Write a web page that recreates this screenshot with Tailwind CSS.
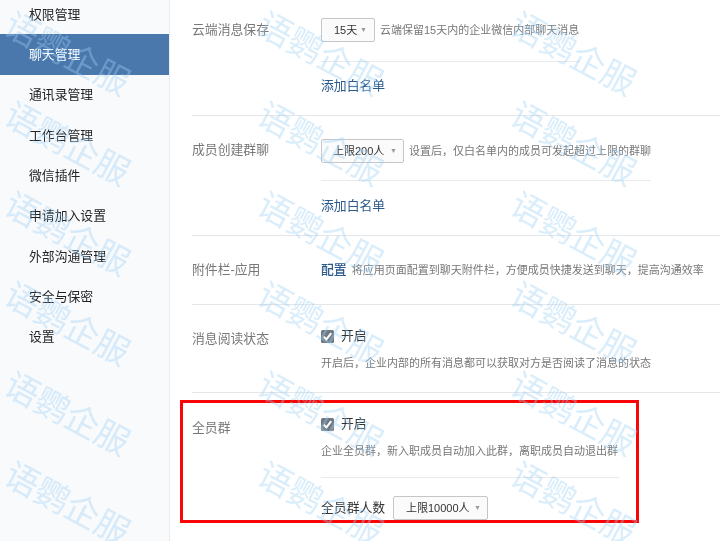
<!DOCTYPE html>
<html lang="zh">
<head>
<meta charset="utf-8">
<script src="https://cdn.jsdelivr.net/npm/@tailwindcss/browser@4"></script>
</head>
<body class="bg-white">
<div class="relative flex w-[720px] h-[541px] overflow-hidden font-['Liberation_Sans','Noto_Sans_CJK_SC',sans-serif] text-[12.83px] blur-[0.3px]">
  <aside class="w-[170px] shrink-0 bg-[#f8fafc] border-r border-dotted border-[#dcdfe3] text-[#222]">
    <ul class="-mt-[6px]">
      <li class="h-[40.33px] pl-[29px] flex items-center">权限管理</li>
      <li class="h-[40.33px] pl-[29px] flex items-center bg-[#4a78ad] text-white">聊天管理</li>
      <li class="h-[40.33px] pl-[29px] flex items-center">通讯录管理</li>
      <li class="h-[40.33px] pl-[29px] flex items-center">工作台管理</li>
      <li class="h-[40.33px] pl-[29px] flex items-center">微信插件</li>
      <li class="h-[40.33px] pl-[29px] flex items-center">申请加入设置</li>
      <li class="h-[40.33px] pl-[29px] flex items-center">外部沟通管理</li>
      <li class="h-[40.33px] pl-[29px] flex items-center">安全与保密</li>
      <li class="h-[40.33px] pl-[29px] flex items-center">设置</li>
    </ul>
  </aside>
  <main class="flex-1 pl-[22px] text-[#787878]">
    <section class="h-[236px] border-b border-[#e4e6e9]">
      <div class="h-[115px] flex">
        <div class="w-[129px] pt-[21px] leading-[18px]">云端消息保存</div>
        <div class="flex-1">
          <div class="flex items-start gap-[5px] pt-[18px] w-[259px] h-[62px] border-b border-[#e8eaec]">
            <button class="w-[54px] h-[24px] shrink-0 flex items-center justify-between pl-[12px] pr-[7px] bg-[#fbfbfb] border border-[#c4c6c9] rounded-[2px] text-[11px] text-[#333] whitespace-nowrap">15天<span class="text-[7px] text-[#9a9a9a]">▼</span></button>
            <span class="text-[11px] leading-[24px] text-[#777] whitespace-nowrap">云端保留15天内的企业微信内部聊天消息</span>
          </div>
          <a class="block mt-[14px] leading-[20px] text-[#2b5a8c]">添加白名单</a>
        </div>
      </div>
      <div class="h-[120px] flex border-t border-[#e4e6e9]">
        <div class="w-[129px] pt-[24px] leading-[20px]">成员创建群聊</div>
        <div class="flex-1">
          <div class="flex items-start gap-[5px] pt-[23px] w-[330px] h-[65px] border-b border-[#e8eaec]">
            <button class="w-[83px] h-[24px] shrink-0 flex items-center justify-between pl-[11px] pr-[6px] bg-[#fbfbfb] border border-[#c4c6c9] rounded-[2px] text-[11px] text-[#333] whitespace-nowrap">上限200人<span class="text-[7px] text-[#9a9a9a]">▼</span></button>
            <span class="text-[11px] leading-[24px] text-[#777] whitespace-nowrap">设置后，仅白名单内的成员可发起超过上限的群聊</span>
          </div>
          <a class="block mt-[15px] leading-[20px] text-[#2b5a8c]">添加白名单</a>
        </div>
      </div>
    </section>
    <section class="h-[69px] flex items-center border-b border-[#e4e6e9]">
      <div class="w-[129px]">附件栏-应用</div>
      <div class="flex-1 flex items-center gap-[5px]">
        <a class="text-[#2b5a8c] font-medium">配置</a>
        <span class="text-[11px] text-[#777] whitespace-nowrap">将应用页面配置到聊天附件栏，方便成员快捷发送到聊天，提高沟通效率</span>
      </div>
    </section>
    <section class="h-[88px] flex border-b border-[#e4e6e9]">
      <div class="w-[129px] pt-[24px] leading-[20px]">消息阅读状态</div>
      <div class="flex-1 pt-[20px]">
        <label class="flex items-center gap-[7px] text-[#333] h-[22px]">
          <svg class="w-[13px] h-[13px]" viewBox="0 0 13 13"><rect width="13" height="13" rx="1.5" fill="#6f7882"/><path d="M2.8 6.6 5.4 9.4 10.2 3.2" fill="none" stroke="#fff" stroke-width="2"/></svg>开启
        </label>
        <p class="mt-[8px] text-[11px] text-[#777] leading-[16px] whitespace-nowrap">开启后，企业内部的所有消息都可以获取对方是否阅读了消息的状态</p>
      </div>
    </section>
    <section class="flex pt-[20px]">
      <div class="w-[129px] pt-[5px] leading-[20px]">全员群</div>
      <div class="flex-1">
        <div class="w-[298px] h-[65px] border-b border-[#e8eaec]">
          <label class="flex items-center gap-[7px] text-[#333] h-[22px]">
            <svg class="w-[13px] h-[13px]" viewBox="0 0 13 13"><rect width="13" height="13" rx="1.5" fill="#6f7882"/><path d="M2.8 6.6 5.4 9.4 10.2 3.2" fill="none" stroke="#fff" stroke-width="2"/></svg>开启
          </label>
          <p class="mt-[8px] text-[11px] text-[#777] leading-[16px] whitespace-nowrap">企业全员群，新入职成员自动加入此群，离职成员自动退出群</p>
        </div>
        <div class="flex items-center gap-[7px] mt-[18px] text-[#333]">
          <span class="whitespace-nowrap w-[65px]">全员群人数</span>
          <button class="w-[95px] h-[24px] shrink-0 flex items-center justify-between pl-[12px] pr-[6px] bg-[#fbfbfb] border border-[#c4c6c9] rounded-[2px] text-[11px] whitespace-nowrap">上限10000人<span class="text-[7px] text-[#9a9a9a]">▼</span></button>
        </div>
      </div>
    </section>
  </main>
  <div class="absolute left-[180px] top-[400px] w-[459px] h-[123px] border-[3px] border-[#fa0505]"></div>
  <div class="absolute inset-0 pointer-events-none text-[#9fd0f5]/38 text-[34px] font-['Noto_Sans_CJK_SC',sans-serif] leading-none whitespace-nowrap">
    <span class="absolute left-0 top-[35px] rotate-[28deg]">语鹦企服</span>
    <span class="absolute left-[253px] top-[35px] rotate-[28deg]">语鹦企服</span>
    <span class="absolute left-[506px] top-[35px] rotate-[28deg]">语鹦企服</span>
    <span class="absolute left-0 top-[125px] rotate-[28deg]">语鹦企服</span>
    <span class="absolute left-[253px] top-[125px] rotate-[28deg]">语鹦企服</span>
    <span class="absolute left-[506px] top-[125px] rotate-[28deg]">语鹦企服</span>
    <span class="absolute left-0 top-[215px] rotate-[28deg]">语鹦企服</span>
    <span class="absolute left-[253px] top-[215px] rotate-[28deg]">语鹦企服</span>
    <span class="absolute left-[506px] top-[215px] rotate-[28deg]">语鹦企服</span>
    <span class="absolute left-0 top-[305px] rotate-[28deg]">语鹦企服</span>
    <span class="absolute left-[253px] top-[305px] rotate-[28deg]">语鹦企服</span>
    <span class="absolute left-[506px] top-[305px] rotate-[28deg]">语鹦企服</span>
    <span class="absolute left-0 top-[395px] rotate-[28deg]">语鹦企服</span>
    <span class="absolute left-[253px] top-[395px] rotate-[28deg]">语鹦企服</span>
    <span class="absolute left-[506px] top-[395px] rotate-[28deg]">语鹦企服</span>
    <span class="absolute left-0 top-[485px] rotate-[28deg]">语鹦企服</span>
    <span class="absolute left-[253px] top-[485px] rotate-[28deg]">语鹦企服</span>
    <span class="absolute left-[506px] top-[485px] rotate-[28deg]">语鹦企服</span>
  </div>
</div>
</body>
</html>
